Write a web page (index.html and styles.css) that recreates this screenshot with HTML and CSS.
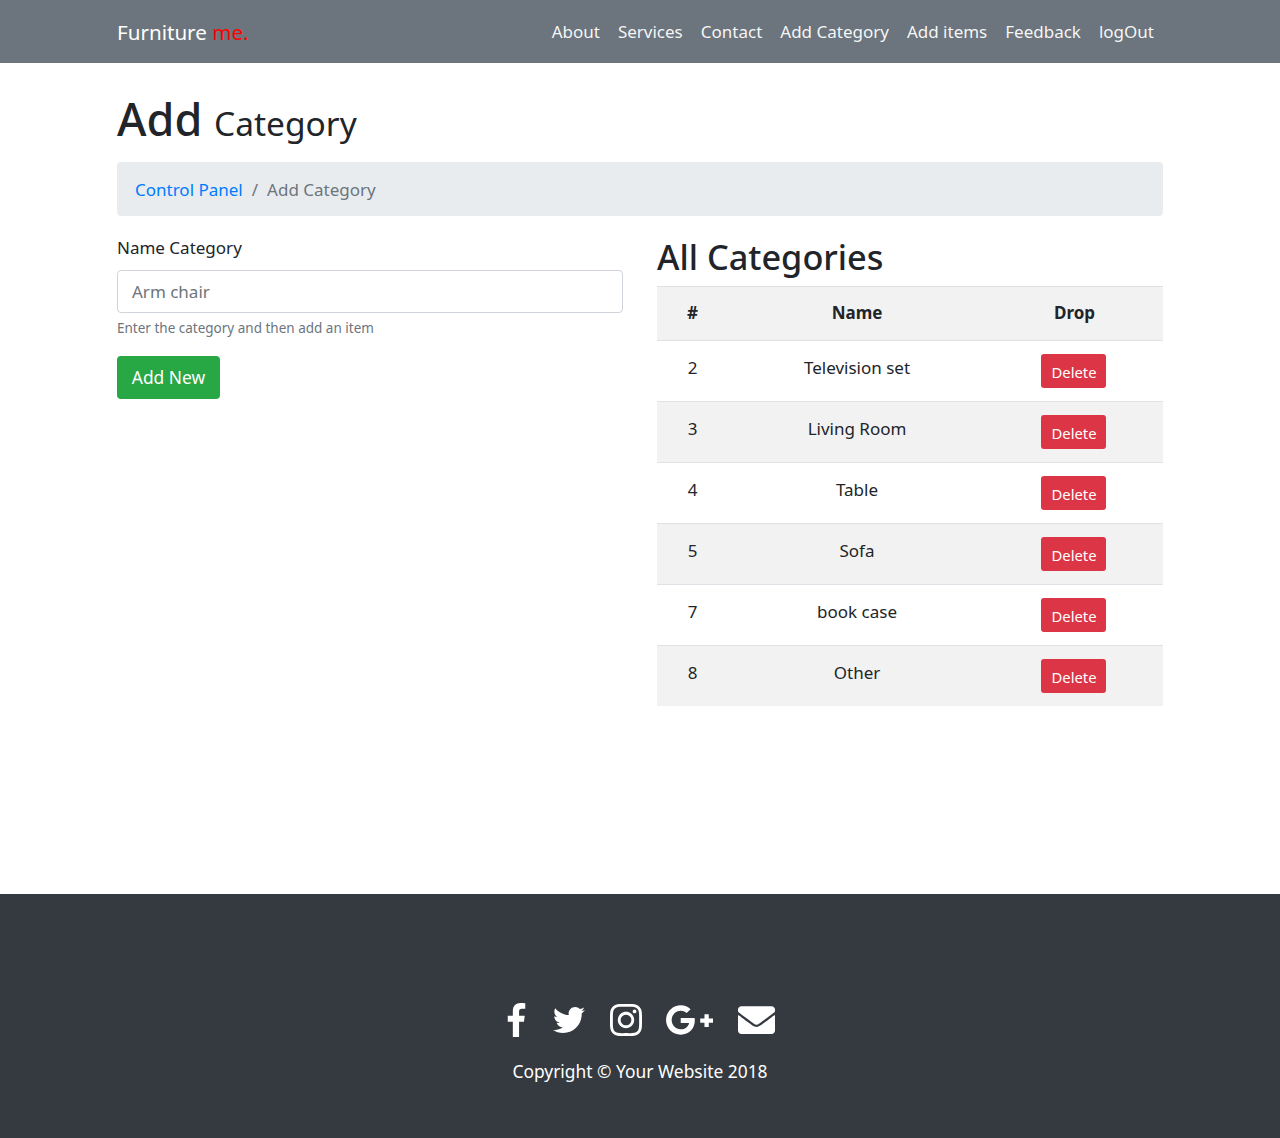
FILE: index.html
```html
<!DOCTYPE html>
<html lang="en">
<head>
<meta charset="utf-8">
<title>Add Category</title>
<link rel="stylesheet" href="styles.css">
</head>
<body>
<nav class="navbar">
  <div class="wrap nav-inner">
    <a class="brand" href="#">Furniture <span class="brand-accent">me.</span></a>
    <ul class="nav-links">
      <li><a href="#">About</a></li>
      <li><a href="#">Services</a></li>
      <li><a href="#">Contact</a></li>
      <li><a href="#">Add Category</a></li>
      <li><a href="#">Add items</a></li>
      <li><a href="#">Feedback</a></li>
      <li><a href="#">logOut</a></li>
    </ul>
  </div>
</nav>
<main class="wrap main">
  <h1 class="page-title">Add <small>Category</small></h1>
  <ol class="breadcrumb">
    <li><a href="#">Control Panel</a></li>
    <li class="sep">/</li>
    <li class="current">Add Category</li>
  </ol>
  <div class="columns">
    <form class="form-col">
      <label class="label" for="cat">Name Category</label>
      <input class="input" id="cat" type="text" placeholder="Arm chair">
      <p class="help">Enter the category and then add an item</p>
      <button class="btn btn-add" type="button">Add New</button>
    </form>
    <section class="table-col">
      <h2 class="table-title">All Categories</h2>
      <table class="table">
        <thead>
          <tr><th class="c-id">#</th><th class="c-name">Name</th><th class="c-drop">Drop</th></tr>
        </thead>
        <tbody>
          <tr><td>2</td><td>Television set</td><td><a class="btn-del" href="#">Delete</a></td></tr>
          <tr><td>3</td><td>Living Room</td><td><a class="btn-del" href="#">Delete</a></td></tr>
          <tr><td>4</td><td>Table</td><td><a class="btn-del" href="#">Delete</a></td></tr>
          <tr><td>5</td><td>Sofa</td><td><a class="btn-del" href="#">Delete</a></td></tr>
          <tr><td>7</td><td>book case</td><td><a class="btn-del" href="#">Delete</a></td></tr>
          <tr><td>8</td><td>Other</td><td><a class="btn-del" href="#">Delete</a></td></tr>
        </tbody>
      </table>
    </section>
  </div>
</main>
<footer class="footer">
  <div class="social">
    <svg class="i-f" viewBox="0 0 264 512"><path d="M76.7 512V283H0v-91h76.7v-71.7C76.7 42.4 124.3 0 193.8 0c33.3 0 61.9 2.5 70.2 3.6V85h-48.2c-37.8 0-45.1 18-45.1 44.3V192H256l-11.7 91h-73.6v229"/></svg>
    <svg class="i-tw" viewBox="0 48 512 416"><path d="M459.37 151.716c.325 4.548.325 9.097.325 13.645 0 138.72-105.583 298.558-298.558 298.558-59.452 0-114.68-17.219-161.137-47.106 8.447.974 16.568 1.299 25.34 1.299 49.055 0 94.213-16.568 130.274-44.832-46.132-.975-84.792-31.188-98.112-72.772 6.498.974 12.995 1.624 19.818 1.624 9.421 0 18.843-1.3 27.614-3.573-48.081-9.747-84.143-51.98-84.143-102.985v-1.299c13.969 7.797 30.214 12.67 47.431 13.319-28.264-18.843-46.781-51.005-46.781-87.391 0-19.492 5.197-37.36 14.294-52.954 51.655 63.675 129.3 105.258 216.365 109.807-1.624-7.797-2.599-15.918-2.599-24.04 0-57.828 46.782-104.934 104.934-104.934 30.213 0 57.502 12.67 76.67 33.137 23.715-4.548 46.456-13.32 66.599-25.34-7.798 24.366-24.366 44.833-46.132 57.827 21.117-2.273 41.584-8.122 60.426-16.243-14.292 20.791-32.161 39.308-52.628 54.253z"/></svg>
    <svg class="i-ig" viewBox="0 32 448 448"><path d="M224.1 141c-63.6 0-114.9 51.3-114.9 114.9s51.3 114.9 114.9 114.9S339 319.5 339 255.9 287.7 141 224.1 141zm0 189.6c-41.1 0-74.7-33.5-74.7-74.7s33.5-74.7 74.7-74.7 74.7 33.5 74.7 74.7-33.6 74.7-74.7 74.7zm146.4-194.3c0 14.9-12 26.8-26.8 26.8-14.9 0-26.8-12-26.8-26.8s12-26.8 26.8-26.8 26.8 12 26.8 26.8zm76.1 27.2c-1.7-35.9-9.9-67.7-36.2-93.9-26.2-26.2-58-34.4-93.9-36.2-37-2.1-147.9-2.1-184.9 0-35.8 1.7-67.6 9.9-93.9 36.1s-34.4 58-36.2 93.9c-2.1 37-2.1 147.9 0 184.9 1.7 35.9 9.9 67.7 36.2 93.9s58 34.4 93.9 36.2c37 2.1 147.9 2.1 184.9 0 35.9-1.7 67.7-9.9 93.9-36.2 26.2-26.2 34.4-58 36.2-93.9 2.1-37 2.1-147.8 0-184.8zM398.8 388c-7.8 19.6-22.9 34.7-42.6 42.6-29.5 11.7-99.5 9-132.1 9s-102.7 2.6-132.1-9c-19.6-7.8-34.7-22.9-42.6-42.6-11.7-29.5-9-99.5-9-132.1s-2.6-102.7 9-132.1c7.8-19.6 22.9-34.7 42.6-42.6 29.5-11.7 99.5-9 132.1-9s102.7-2.6 132.1 9c19.6 7.8 34.7 22.9 42.6 42.6 11.7 29.5 9 99.5 9 132.1s2.7 102.7-9 132.1z"/></svg>
    <svg class="i-g" viewBox="12 64 615 384"><path d="M386.061 228.496c1.834 9.692 3.143 19.384 3.143 31.956C389.204 370.205 315.599 448 204.8 448c-106.084 0-192-85.915-192-192s85.916-192 192-192c51.864 0 95.083 18.859 128.611 50.292l-52.126 50.03c-14.145-13.621-39.028-29.599-76.485-29.599-65.484 0-118.92 54.221-118.92 121.277 0 67.056 53.436 121.277 118.92 121.277 75.961 0 104.513-54.745 108.965-82.773H204.8v-66.009h181.261zm185.406 6.437V179.2h-56.001v55.733h-55.733v56.001h55.733v55.733h56.001v-55.733H627.2v-56.001h-55.733z"/></svg>
    <svg class="i-env" viewBox="0 64 512 384"><path d="M502.3 190.8c3.9-3.1 9.7-.2 9.7 4.7V400c0 26.5-21.5 48-48 48H48c-26.5 0-48-21.5-48-48V195.6c0-5 5.7-7.8 9.7-4.7 22.4 17.4 52.1 39.5 154.1 113.6 21.1 15.4 56.7 47.8 92.2 47.6 35.7.3 72-32.8 92.3-47.6 102-74.1 131.6-96.3 154-113.7zM256 320c23.2.4 56.6-29.2 73.4-41.4 132.7-96.3 142.8-104.7 173.4-128.7 5.8-4.5 9.2-11.5 9.2-18.9v-19c0-26.5-21.5-48-48-48H48C21.5 64 0 85.5 0 112v19c0 7.4 3.4 14.3 9.2 18.9 30.6 23.9 40.7 32.4 173.4 128.7 16.8 12.2 50.2 41.8 73.4 41.4z"/></svg>
  </div>
  <p class="copyright">Copyright © Your Website 2018</p>
</footer>
</body>
</html>
```

FILE: styles.css
```css
* { box-sizing: border-box; }
html, body { margin: 0; padding: 0; }
body {
  font-family: "Noto Sans", "Open Sans", sans-serif;
  font-size: 17px;
  line-height: 24px;
  color: #212529;
  background: #fff;
}
a { text-decoration: none; }
.wrap { width: 1046px; margin: 0 auto; }

.navbar { background: #6c757d; height: 63px; }
.nav-inner { height: 63px; display: flex; align-items: center; justify-content: space-between; padding-top: 1px; }
.brand { color: #fff; font-size: 20.6px; line-height: 30px; }
.brand-accent { color: #f00; }
.nav-links { list-style: none; margin: 0; padding: 0 9px 0 0; display: flex; gap: 18px; }
.nav-links a { color: rgba(255,255,255,.94); }

.main { min-height: 831px; padding-top: 28px; }
.page-title { margin: 0 0 16px; font-size: 45px; line-height: 55px; height: 55px; font-weight: 500; }
.page-title small { font-size: 33.5px; font-weight: 400; }

.breadcrumb { list-style: none; margin: 0 0 16px; padding: 1px 18px 0; height: 54px; display: flex; align-items: center; gap: 9px; background: #e9ecef; border-radius: 4px; }
.breadcrumb a { color: #007bff; }
.sep, .current { color: #6c757d; }

.columns { display: flex; gap: 34px; align-items: flex-start; }
.form-col, .table-col { flex: 1 1 0; }

.label { display: block; margin-bottom: 10px; padding-top: 4px; }
.input { display: block; width: 100%; height: 43px; padding: 6px 14px; font: inherit; color: #495057; border: 1px solid #ced4da; border-radius: 4px; background: #fff; }
.input::placeholder { color: #6c757d; opacity: 1; }
.help { margin: 4px 0 17px; font-size: 13.5px; line-height: 22px; color: #6c757d; }
.btn { display: block; width: 103px; height: 43px; padding: 0 0 2px; font: inherit; font-size: 17.4px; border: 0; border-radius: 4px; color: #fff; }
.btn-add { background: #28a745; }

.table-title { margin: 0 0 8px; padding-top: 4px; font-size: 34.3px; line-height: 42px; font-weight: 500; }
.table { width: 100%; border-collapse: collapse; table-layout: fixed; }
.table th, .table td { padding: 12px; text-align: center; vertical-align: top; border-top: 1px solid #dee2e6; }
.table th { padding-top: 14px; padding-bottom: 15px; font-weight: 700; }
.table td { height: 61px; padding-top: 15px; }
.table tbody tr:last-child td { height: 60px; padding-bottom: 0; }
.c-id { width: 71px; }
.c-drop { width: 177px; }
.table thead tr, .table tbody tr:nth-child(even) { background: #f2f2f2; }
.table td .btn-del { display: inline-block; width: 65px; height: 34px; margin: -2px 2px 0 0; padding: 6px 0 0 1px; font-size: 14.8px; line-height: 24px; color: #fff; background: #dc3545; border-radius: 3px; }

.footer { height: 244px; background: #343a40; padding-top: 108px; color: #fff; text-align: center; }
.social { display: flex; justify-content: center; align-items: center; gap: 25px; height: 36px; padding-left: 2px; }
.social svg { display: block; fill: #fff; }
.i-f { width: 19px; height: 34px; }
.i-tw { width: 32px; height: 26px; margin-left: 2px; }
.i-ig { width: 32px; height: 32px; }
.i-g { width: 47px; height: 30px; margin-left: -1px; }
.i-env { width: 37px; height: 28px; }
.copyright { margin: 21px 0 0; font-size: 17.4px; }
```
